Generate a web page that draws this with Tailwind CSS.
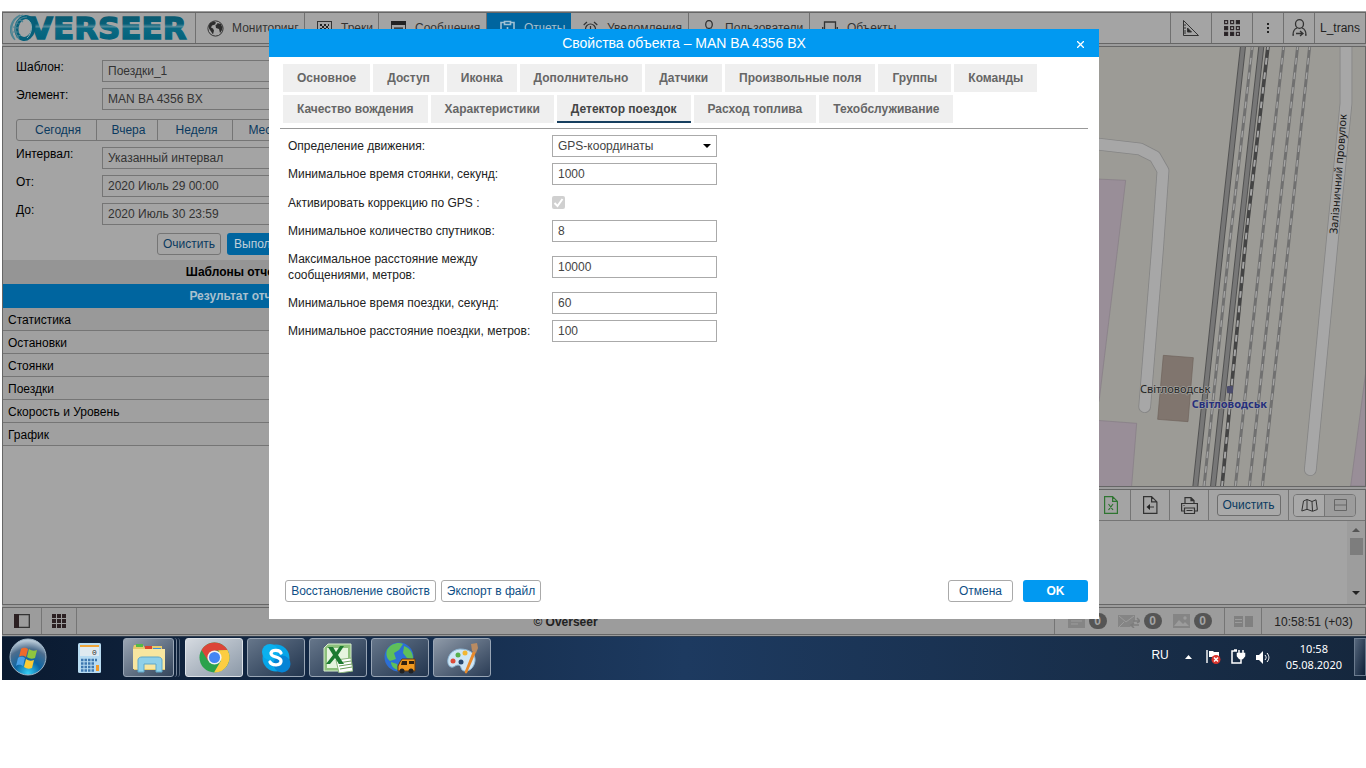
<!DOCTYPE html>
<html lang="ru">
<head>
<meta charset="utf-8">
<title>Overseer – Свойства объекта</title>
<script src="https://cdn.jsdelivr.net/npm/@tailwindcss/browser@4"></script>
</head>
<body class="min-h-screen overflow-hidden bg-white pt-[11px] font-['Liberation_Sans',Arial,sans-serif] text-[12px] leading-4 text-black">

<div class="relative ml-[2px] flex flex-col gap-[2px] bg-[#9c9c9c] py-px">

  <!-- Top navigation -->
  <header class="flex h-8 items-stretch border border-[#666] bg-[#a4a4a4] text-[12px] text-[#333]">
    <div class="flex w-[193px] shrink-0 items-center border-r border-[#707070] pl-[7px]">
      <svg class="h-[28px] w-[185px]" viewBox="0 0 185 28" role="img" aria-label="Overseer">
        <defs>
          <linearGradient id="teal" gradientUnits="userSpaceOnUse" x1="0" y1="3" x2="0" y2="26">
            <stop offset="0" stop-color="#0a5a70"/><stop offset=".3" stop-color="#075f78"/><stop offset=".42" stop-color="#4f8a9a"/><stop offset=".5" stop-color="#0b6982"/><stop offset="1" stop-color="#02627c"/>
          </linearGradient>
        </defs>
        <text x="19" y="25" font-family="DejaVu Sans" font-weight="700" font-size="31" fill="url(#teal)" stroke="url(#teal)" stroke-width="1.400">VERSEER</text>
        <ellipse cx="15" cy="14" rx="8.500" ry="11" fill="none" stroke="#07607a" stroke-width="4" transform="rotate(12 15 14)"/>
        <g fill="none" stroke="#4c8493" stroke-width="1.200">
          <path d="M13 1C3 3-2 15 5 26M10 1C1 5-3 17 4 25M17 3C6 3 2 15 9 25M5 9l5 1M3 13l6 1M3 18l6 0M6 23l5-2M9 5l4 3"/>
        </g>
        <path d="M17 6c7 2 5 14 0 18" fill="none" stroke="#88adb5" stroke-width="1"/>
      </svg>
    </div>
    <nav class="flex min-w-0 flex-1">
      <a href="#" class="flex w-[109px] items-center gap-2 border-r border-[#707070] pl-[11px]"><svg class="size-[17px] shrink-0" viewBox="0 0 17 17"><circle cx="8.500" cy="8.500" r="7.600" fill="none" stroke="#333" stroke-width="1"/><path d="M3 3l4-1.500 2 1-1 2-3 1-1 2 2 1 1 2-1 4-2-3-2-3 0-3zM10 3l4 1 1.500 4-1 3-1.500 2-1-4-3-1-.5-3 2-1z" fill="#2c2c2c"/></svg>Мониторинг</a>
      <a href="#" class="flex w-[74px] items-center gap-[9px] border-r border-[#707070] pl-3"><svg class="h-[15px] w-[15px] shrink-0" viewBox="0 0 15 15"><rect x=".5" y=".5" width="14" height="14" fill="none" stroke="#333"/><path d="M3 3h2v2H3zM7 3h2v2H7zM11 3h1v2h-1zM5 5h2v2H5zM9 5h2v2H9zM3 7h2v2H3zM7 7h2v2H7zM11 7h1v2h-1zM5 9h2v2H5zM9 9h2v2H9z" fill="#222"/></svg>Треки</a>
      <a href="#" class="flex w-[108px] items-center gap-[9px] border-r border-[#707070] pl-3"><svg class="h-[15px] w-[15px] shrink-0" viewBox="0 0 15 15"><path d="M.5 .5h14v14H.5z" fill="none" stroke="#333"/><path d="M0 0h15v4H0zM3 6.500h9v1.300H3z" fill="#222"/></svg>Сообщения</a>
      <a href="#" class="flex w-[84px] items-center gap-[9px] bg-[#00659f] pl-[13px] text-[#a8bfcd]"><svg class="h-[16px] w-[15px] shrink-0" viewBox="0 0 15 16" fill="none" stroke="#9fc0d2" stroke-width="1.600"><path d="M4 2.500H1v12h13v-12h-3M4.500 1.500h6v3h-6z"/><path d="M7.500 7v5M4 10v2M11 9v3"/></svg>Отчеты</a>
      <a href="#" class="flex w-[118px] items-center gap-[9px] border-r border-[#707070] pl-3"><svg class="size-[15px] shrink-0" viewBox="0 0 15 15" fill="none" stroke="#333" stroke-width="1.200"><circle cx="7.500" cy="8" r="5"/><path d="M7.500 5v3.500H10M.7 4L4 1M14.300 4L11 1"/></svg>Уведомления</a>
      <a href="#" class="flex w-[121px] items-center gap-[9px] border-r border-[#707070] pl-[13px]"><svg class="h-[16px] w-[14px] shrink-0" viewBox="0 0 14 16" fill="none" stroke="#333" stroke-width="1.300"><ellipse cx="7" cy="4.500" rx="3.300" ry="4"/><path d="M1 15c0-4 2-5 4-6M13 15c0-4-2-5-4-6"/></svg>Пользователи</a>
      <a href="#" class="flex items-center gap-[9px] pl-3"><svg class="h-[15px] w-[16px] shrink-0" viewBox="0 0 16 15" fill="none" stroke="#333" stroke-width="1.300"><path d="M2.500 1h11v8h-11zM.7 6v6h14.600V6M3 12v2M13 12v2"/></svg>Объекты</a>
    </nav>
    <div class="flex shrink-0">
      <button class="grid w-[41px] place-items-center border-l border-[#707070]" aria-label="Инструменты"><svg class="size-4" viewBox="0 0 16 16" fill="none" stroke="#333"><path d="M.5 .5v15h15zM1 5h2M1 8h2M1 11h2M1 13h2"/><path d="M4.500 8v4h4z" fill="#222"/></svg></button>
      <button class="grid w-[41px] place-items-center border-l border-[#707070]" aria-label="Приложения"><svg class="size-4" viewBox="0 0 16 16" fill="none" stroke="#30282c" stroke-width="1.200"><path d="M.6 .6h3v3h-3zM6.600 .6h3v3h-3zM6.600 6.600h3v3h-3zM12.400 6.600h3v3h-3zM12.400 12.400h3v3h-3z"/><path fill="#222" d="M12.400 .6h3v3h-3zM.6 6.600h3v3h-3zM.6 12.400h3v3h-3zM6.600 12.400h3v3h-3z"/></svg></button>
      <button class="grid w-[31px] place-items-center border-l border-[#707070]" aria-label="Меню"><svg class="h-3 w-1" viewBox="0 0 4 12"><path d="M1 1h2v2H1zM1 5h2v2H1zM1 9h2v2H1z" fill="#222"/></svg></button>
      <button class="grid w-[31px] place-items-center border-l border-[#707070]" aria-label="Выйти"><svg class="h-[18px] w-[15px]" viewBox="0 0 15 18" fill="none" stroke="#333" stroke-width="1.300"><ellipse cx="7.500" cy="5" rx="4" ry="4.300"/><path d="M5 9c-3 1-4 3-4 7h1M10 9c3 1 4 3 4 7h-1M4 14.500h6M8 12l3 2.500L8 17"/></svg></button>
      <a href="#" class="flex w-[51px] items-center justify-center border-l border-[#707070] text-[#222]">L_trans</a>
    </div>
  </header>

  <!-- Work area -->
  <main class="flex min-h-[559px] items-stretch">
    <aside class="flex w-[472px] shrink-0 flex-col border border-[#666] bg-[#a4a4a4]">
      <div class="flex flex-col gap-[6px] px-[13px] pt-[13px]">
        <div class="flex"><label for="tpl" class="w-[86px] leading-[14px]">Шаблон:</label><select id="tpl" class="h-[22px] flex-1 appearance-none border border-[#757575] px-[5px] text-[#333]"><option>Поездки_1</option></select></div>
        <div class="flex"><label for="unit" class="w-[86px] leading-[14px]">Элемент:</label><select id="unit" class="h-[22px] flex-1 appearance-none border border-[#757575] px-[5px] text-[#333]"><option>MAN BA 4356 BX</option></select></div>
        <div class="mt-[3px] flex h-[22px] divide-x divide-[#757575] rounded-[3px] border border-[#757575] text-[#0b3a60]">
          <button class="w-[80px] pl-[3px]">Сегодня</button><button class="w-[61px] pl-[3px]">Вчера</button><button class="w-[75px] pl-[3px]">Неделя</button><button class="w-[68px]">Месяц</button><button class="flex-1">Год</button>
        </div>
        <div class="flex"><label for="intv" class="w-[86px] leading-[14px]">Интервал:</label><select id="intv" class="h-[22px] flex-1 appearance-none border border-[#757575] px-[5px] text-[#333]"><option>Указанный интервал</option></select></div>
        <div class="flex"><label for="from" class="w-[86px] leading-[14px]">От:</label><input id="from" value="2020 Июль 29 00:00" class="h-[22px] flex-1 border border-[#757575] px-[5px] text-[#333]"></div>
        <div class="flex"><label for="to" class="w-[86px] leading-[14px]">До:</label><input id="to" value="2020 Июль 30 23:59" class="h-[22px] flex-1 border border-[#757575] px-[5px] text-[#333]"></div>
        <div class="mt-[2px] flex h-[22px] justify-center gap-[6px]">
          <button class="w-16 rounded-[3px] border border-[#757575] text-[#0b3a60]">Очистить</button>
          <button class="w-[92px] rounded-[3px] bg-[#00659f] pl-[7px] text-left text-[#c0d0da]">Выполнить</button>
        </div>
      </div>
      <h2 class="mt-[5px] flex h-6 items-center justify-center bg-[#959595] pl-1 text-[12px] font-bold">Шаблоны отчетов</h2>
      <h2 class="flex h-6 items-center justify-center bg-[#00659f] pl-1 text-[12px] font-bold text-[#a9c0ce]">Результат отчета</h2>
      <ul class="bg-[#a0a0a0]">
        <li class="h-[23px] border-b border-[#757575] bg-[#999] px-[5px] pt-[4px]"><a href="#">Статистика</a></li>
        <li class="h-[23px] border-b border-[#757575] px-[5px] pt-[4px]"><a href="#">Остановки</a></li>
        <li class="h-[23px] border-b border-[#757575] px-[5px] pt-[4px]"><a href="#">Стоянки</a></li>
        <li class="h-[23px] border-b border-[#757575] px-[5px] pt-[4px]"><a href="#">Поездки</a></li>
        <li class="h-[23px] border-b border-[#757575] px-[5px] pt-[4px]"><a href="#">Скорость и Уровень</a></li>
        <li class="h-[23px] border-b border-[#757575] px-[5px] pt-[4px]"><a href="#">График</a></li>
      </ul>
    </aside>

    <section class="flex min-w-0 flex-1 flex-col gap-[2px]">
      <div class="flex flex-1 justify-end border border-[#666] bg-[#9c9b96]">
        <svg class="h-[439px] w-[267px]" viewBox="24 141 801 1317" role="img" aria-label="Карта">
          <g fill="#998e98" stroke="#857b85" stroke-width="2">
            <path d="M20 537l87 4L86 720 27 1205h-7zM20 1261l120 9-16 200H20zM828 1110l-46 348h46z"/>
          </g>
          <g fill="none" stroke-linecap="round" stroke-linejoin="round">
            <path d="M20 432l130 15 45 23 24 42-16 228-39 480" stroke="#858585" stroke-width="38"/>
            <path d="M20 432l130 15 45 23 24 42-16 228-39 480" stroke="#a7a7a7" stroke-width="33"/>
            <path d="M768 130v180l-41 410-66 689" stroke="#858585" stroke-width="38"/>
            <path d="M768 130v180l-41 410-66 689" stroke="#a7a7a7" stroke-width="33"/>
          </g>
          <path d="M220 1066l90 7-16 192-91-7z" fill="#80756e" stroke="#6e625b" stroke-width="2"/>
          <g fill="none">
            <path d="M460 130L395 720l-79 740M515 130L449 720l-80 740" stroke="#525252" stroke-width="18"/>
            <path d="M460 130L395 720l-79 740M515 130L449 720l-80 740" stroke="#777" stroke-width="12"/>
            <path d="M488 130L420 720l-78 740M582 130L516 720l-80 740M624 130L558 720l-80 740M660 130L597 720l-80 740" stroke="#707070" stroke-width="9"/>
            <path d="M488 130L420 720l-78 740M582 130L516 720l-80 740M624 130L558 720l-80 740M660 130L597 720l-80 740" stroke="#a5a5a5" stroke-width="4" stroke-dasharray="20 24"/>
            <path d="M535 130L467 720l-71 740" stroke="#444" stroke-width="11"/>
            <path d="M535 130L467 720l-71 740" stroke="#a5a5a5" stroke-width="6" stroke-dasharray="20 24"/>
          </g>
          <rect x="411" y="1158" width="18" height="22" rx="3" fill="#4b4c6c"/>
          <g font-family="'Noto Sans'" font-size="33" stroke-linejoin="round" paint-order="stroke" stroke="#a3a3a0" stroke-width="4">
            <text x="150" y="1178" fill="#262626">Світловодськ</text>
            <text x="305" y="1223" font-weight="700" fill="#27307c">Світловодськ</text>
            <text x="0" y="0" transform="translate(742 703) rotate(-85.500)" fill="#161616" stroke="none">Залізничний провулок</text>
          </g>
        </svg>
      </div>
      <div class="flex h-[116px] flex-col border border-[#666] bg-[#a4a4a4]">
        <div class="flex h-[31px] shrink-0 items-stretch justify-end divide-x divide-[#757575] border-b border-[#757575]">
          <button class="grid w-[39px] place-items-center" aria-label="Экспорт в Excel"><svg class="h-[18px] w-[14px]" viewBox="0 0 14 18" fill="none" stroke="#2f7531" stroke-width="1.200"><path d="M.6 .6h8l4.800 4.800v12H.6zM8.600 .6v4.800h4.800M4.500 8l4.500 6M9 8l-4.500 6"/></svg></button>
          <button class="grid w-[39px] place-items-center" aria-label="Экспорт в файл"><svg class="h-[18px] w-[15px]" viewBox="0 0 15 18" fill="none" stroke="#333" stroke-width="1.200"><path d="M.6 .6h8l5.300 5.300v11.500H.6zM8.600 .6v5.300h5.300M11 11H6"/><path d="M7 8v6l-3.500-3z" fill="#222" stroke="none"/></svg></button>
          <button class="grid w-[39px] place-items-center" aria-label="Печать"><svg class="h-[17px] w-[17px]" viewBox="0 0 17 17" fill="none" stroke="#333" stroke-width="1.200"><path d="M4 6V.6h6l3 3V6M10 .6v3h3M3.500 14H.6V6.500h15.800V14h-3M2.500 8.500h1M3.500 11h10v5.500h-10zM5.500 13.500h6"/></svg></button>
          <div class="flex w-20 items-center justify-center"><button class="h-[22px] w-16 rounded-[3px] border border-[#6d6d6d] bg-[#a9a9a9] text-[#0b3a60]">Очистить</button></div>
          <div class="flex w-[76px] items-center pl-1">
            <div class="flex h-[23px] w-[63px] overflow-hidden rounded-[4px] border border-[#757575]">
              <button class="grid w-[31px] place-items-center border-r border-[#757575] bg-[#a9a9a9]" aria-label="Карта"><svg class="h-[13px] w-[17px]" viewBox="0 0 17 13" fill="none" stroke="#333"><path d="M2.500 2l3.500-1.500 5 2L15 .8l1.300 9.700-4.800 1.800-5.500-2-5.200 1.700zM6 .5v9.800M11 2.500l.5 9.500"/></svg></button>
              <button class="grid flex-1 place-items-center bg-[#9c9c9c]" aria-label="Таблица"><svg class="h-[12px] w-[13px]" viewBox="0 0 13 12" fill="none" stroke="#666"><path d="M.5 .5h12v11H.5zM.5 6h12"/></svg></button>
            </div>
          </div>
        </div>
        <div class="flex flex-1 justify-end">
          <div class="flex w-[18px] flex-col items-center bg-[#9d9d9d] pt-[7px] pb-[9px]">
            <svg class="h-1 w-2" viewBox="0 0 8 4"><path d="M0 4l4-4 4 4z" fill="#555"/></svg>
            <div class="mt-[6px] h-[17px] w-[13px] bg-[#7d7d7d]"></div>
            <svg class="mt-auto h-1 w-2" viewBox="0 0 8 4"><path d="M0 0l4 4 4-4z" fill="#222"/></svg>
          </div>
        </div>
      </div>
    </section>
  </main>

  <!-- Status bar -->
  <footer class="flex h-7 items-stretch border border-[#666] bg-[#9c9c9c]">
    <button class="grid w-[39px] place-items-center border-r border-[#757575]" aria-label="Боковая панель"><svg class="h-[14px] w-4" viewBox="0 0 16 14"><path d="M.7 .7h14.600v12.600H.7z" fill="none" stroke="#333" stroke-width="1.300"/><path d="M0 0h5v14H0z" fill="#2c2022"/></svg></button>
    <button class="grid w-[35px] place-items-center border-r border-[#757575]" aria-label="Сетка"><svg class="size-[14px]" viewBox="0 0 14 14"><path d="M0 0h4v4H0zM5 0h4v4H5zM10 0h4v4h-4zM0 5h4v4H0zM5 5h4v4H5zM10 5h4v4h-4zM0 10h4v4H0zM5 10h4v4H5zM10 10h4v4h-4z" fill="#2c2022"/></svg></button>
    <p class="flex flex-1 items-center justify-center pt-[2px] font-bold text-[#222]">© Overseer</p>
    <div class="flex w-[170px] items-center justify-center gap-[11px] border-l border-[#757575] font-bold text-[#a4a4a4]">
      <span class="flex items-center gap-1"><svg class="h-[13px] w-[17px]" viewBox="0 0 17 13"><path d="M0 0h17v13H0z" fill="#858585"/><path d="M3 3h11M3 6h11M3 9h7" stroke="#9c9c9c"/></svg><b class="grid h-4 w-[18px] place-items-center rounded-full bg-[#555]">0</b></span>
      <span class="flex items-center gap-1"><svg class="h-[13px] w-[22px]" viewBox="0 0 22 13"><path d="M0 0h17v6l-5 6H0z" fill="#858585"/><path d="M1 1l7 6 8-6M1 12l5-5" fill="none" stroke="#9c9c9c"/><path d="M15 6h7M19 3l3 3-3 2M21 10h-7M16 8l-3 2 3 3" fill="none" stroke="#7d7d7d" stroke-width="1.500"/></svg><b class="grid h-4 w-[18px] place-items-center rounded-full bg-[#555]">0</b></span>
      <span class="flex items-center gap-1"><svg class="h-[14px] w-[17px]" viewBox="0 0 17 14"><path d="M0 0h17v14H0z" fill="#858585"/><circle cx="12" cy="4" r="1.700" fill="#9c9c9c"/><path d="M1 12l5-6 4 4 2-2 4 4z" fill="#9c9c9c"/></svg><b class="grid h-4 w-[18px] place-items-center rounded-full bg-[#555]">0</b></span>
    </div>
    <div class="grid w-[37px] place-items-center border-l border-[#757575]"><svg class="h-[11px] w-[19px]" viewBox="0 0 19 11"><path d="M0 0h9v11H0zM11 0h8v11h-8z" fill="#808080"/><path d="M1 3.500h7M1 6.500h7" stroke="#9c9c9c"/></svg></div>
    <p class="flex w-[104px] items-center justify-center border-l border-[#757575] pt-px text-[#222]">10:58:51 (+03)</p>
  </footer>

  <!-- Object properties dialog -->
  <div role="dialog" aria-labelledby="dlg-title" class="absolute top-[18px] left-1/2 flex min-h-[590px] w-[830px] -translate-x-1/2 flex-col bg-white">
    <div class="grid h-7 grid-cols-[38px_1fr_38px] items-center bg-[#0199f1] text-white">
      <h1 id="dlg-title" class="col-start-2 text-center text-[14px]">Свойства объекта – MAN BA 4356 BX</h1>
      <button class="grid place-items-center" aria-label="Закрыть"><svg class="mt-[2px] size-[7px]" viewBox="0 0 7 7"><path d="M0 0l7 7M7 0L0 7" stroke="#fff" stroke-width="1.300"/></svg></button>
    </div>
    <div class="mx-[11px] flex flex-wrap gap-[3px] border-b border-[#999] pt-[7px] pb-[5px] pl-[3px] font-bold text-[#666]">
      <button class="h-7 bg-[#efefef] px-[14px]">Основное</button>
      <button class="h-7 bg-[#efefef] px-[14px]">Доступ</button>
      <button class="h-7 bg-[#efefef] px-[14px]">Иконка</button>
      <button class="h-7 bg-[#efefef] px-[14px]">Дополнительно</button>
      <button class="h-7 bg-[#efefef] px-[14px]">Датчики</button>
      <button class="h-7 bg-[#efefef] px-[14px]">Произвольные поля</button>
      <button class="h-7 bg-[#efefef] px-[14px]">Группы</button>
      <button class="h-7 bg-[#efefef] px-[14px]">Команды</button>
      <button class="h-7 bg-[#efefef] px-[14px]">Качество вождения</button>
      <button class="h-7 bg-[#efefef] px-[14px]">Характеристики</button>
      <button class="h-7 border-b-2 border-[#173f5f] bg-[#efefef] px-[14px] pt-[2px] text-[#444]">Детектор поездок</button>
      <button class="h-7 bg-[#efefef] px-[14px]">Расход топлива</button>
      <button class="h-7 bg-[#efefef] px-[14px]">Техобслуживание</button>
    </div>
    <form class="grid grid-cols-[264px_165px] items-center gap-y-[6px] pt-[6px] pl-[19px] text-[#222]">
      <label for="motion">Определение движения:</label>
      <div class="relative">
        <select id="motion" class="block h-[22px] w-full appearance-none border border-[#aaa] px-[5px] text-[#444]"><option>GPS-координаты</option></select>
        <svg class="pointer-events-none absolute top-[9px] right-[6px] h-1 w-2" viewBox="0 0 8 4"><path d="M0 0l4 4 4-4z" fill="#000"/></svg>
      </div>
      <label for="stop">Минимальное время стоянки, секунд:</label>
      <input id="stop" value="1000" class="h-[22px] border border-[#aaa] px-[5px] text-[#444]">
      <label for="gps" class="pt-[4px] pb-[3px]">Активировать коррекцию по GPS :</label>
      <div class="relative size-[13px]">
        <input id="gps" type="checkbox" checked disabled class="block size-[13px] appearance-none rounded-[2px] bg-[#d0d0d0]">
        <svg class="pointer-events-none absolute inset-0 size-[13px]" viewBox="0 0 13 13"><path d="M2.500 7l3 3 5-7" fill="none" stroke="#fff" stroke-width="2"/></svg>
      </div>
      <label for="sat">Минимальное количество спутников:</label>
      <input id="sat" value="8" class="h-[22px] border border-[#aaa] px-[5px] text-[#444]">
      <label for="dist" class="py-[3px] pr-10">Максимальное расстояние между сообщениями, метров:</label>
      <input id="dist" value="10000" class="h-[22px] border border-[#aaa] px-[5px] text-[#444]">
      <label for="trip">Минимальное время поездки, секунд:</label>
      <input id="trip" value="60" class="h-[22px] border border-[#aaa] px-[5px] text-[#444]">
      <label for="tripd">Минимальное расстояние поездки, метров:</label>
      <input id="tripd" value="100" class="h-[22px] border border-[#aaa] px-[5px] text-[#444]">
    </form>
    <div class="mt-auto flex h-[39px] items-start pr-[11px] pl-4 text-[#0f4f86]">
      <button class="h-[22px] w-[151px] rounded-[3px] border border-[#aaa]">Восстановление свойств</button>
      <button class="ml-[5px] h-[22px] w-[100px] rounded-[3px] border border-[#aaa]">Экспорт в файл</button>
      <button class="ml-auto h-[22px] w-[65px] rounded-[3px] border border-[#aaa]">Отмена</button>
      <button class="ml-[10px] h-[22px] w-[65px] rounded-[3px] bg-[#0199f1] font-bold text-white">OK</button>
    </div>
  </div>
</div>

<!-- System taskbar -->
<div class="ml-[2px] flex h-11 items-start border-t border-[#2d3c4e] bg-linear-to-r from-[#0a1a30] via-[#1d3a60] to-[#15273d] pt-px text-white">
  <button class="grid w-[52px] place-items-center" aria-label="Пуск"><svg class="h-10 w-[40px]" viewBox="0 0 40 40"><defs><radialGradient id="orb" cx=".5" cy=".95" r=".9"><stop offset="0" stop-color="#35d0f6"/><stop offset=".4" stop-color="#0d66a4"/><stop offset=".75" stop-color="#4d6d8d"/><stop offset="1" stop-color="#b7c8d6"/></radialGradient></defs><circle cx="20" cy="19" r="18" fill="url(#orb)" stroke="#9fb6c8"/><path d="M13 11c3-2 5-1 7 0l-2 8c-2-1-4-2-7 0z" fill="#ee6a2b"/><path d="M21 11c3 2 5 2 8 1l-2 8c-3 1-5 1-8-1z" fill="#8fc63f"/><path d="M10 20c3-2 5-1 7 0l-2 8c-2-1-4-2-7 0z" fill="#4aa0e6"/><path d="M18 21c3 2 5 2 8 1l-2 8c-3 1-5 1-8-1z" fill="#fccb33"/></svg></button>
  <button class="ml-[9px] grid h-[39px] w-[52px] place-items-center" aria-label="Калькулятор"><svg class="h-[30px] w-[23px]" viewBox="0 0 23 30"><rect width="23" height="30" rx="1.500" fill="#b8dcf2"/><path d="M2 3h19v10H2z" fill="#dfeaf0"/><path d="M2 2h19v2H2z" fill="#f0a63a"/><text x="14" y="12" font-family="Liberation Mono" font-size="8" fill="#333">0</text><path d="M3 17h16M3 20.500h13M3 24h13M3 27.500h13" stroke="#3f78b0" stroke-width="2.300" stroke-dasharray="2.500 1"/><path d="M18 22h3v6h-3z" fill="#f19a2a"/></svg></button>
  <button class="ml-[8px] grid h-[39px] w-[51px] place-items-center rounded-[3px] border border-[#98a5b5] bg-linear-to-br from-[#9aa5b3] to-[#34455c]" aria-label="Проводник"><svg class="h-[31px] w-[34px]" viewBox="0 0 34 31"><path d="M1 6l1-3h9l2 3h6V4h11v5h3v19H2z" fill="#e8cb6b"/><path d="M4 2h7v3H4z" fill="#54b948"/><path d="M13 4h7v3h-7z" fill="#d9432f"/><path d="M21 6h8v3h-8z" fill="#3b8fd9"/><path d="M1 7h32v20H1z" fill="#f8e6a0"/><path d="M6 18c0-2 2-3 4-3h16c2 0 4 1 4 3v12h-6v-8H12v8H6z" fill="#8fd0ea" stroke="#5ea7c9"/></svg></button>
  <div class="h-[39px] w-[3px] rounded-r border-r border-[#77869a]"></div><div class="h-[39px] w-[3px] rounded-r border-r border-[#55657b]"></div>
  <button class="ml-[5px] grid h-[39px] w-[58px] place-items-center rounded-[3px] border border-[#dde2e8] bg-linear-to-br from-[#d5dae0] to-[#8c99a8]" aria-label="Chrome"><svg class="size-[31px]" viewBox="0 0 32 32"><circle cx="16" cy="16" r="15.500" fill="#2ba24c"/><path d="M2.600 8.300A15.500 15.500 0 0 1 29.400 8.300L16 9 9.500 19.500z" fill="#dc4437"/><path d="M29.400 8.300A15.500 15.500 0 0 1 15.500 31.500L22.500 19.500 20 8.500z" fill="#fccd41"/><circle cx="16" cy="16" r="7.300" fill="#f2f2f2"/><circle cx="16" cy="16" r="5.700" fill="#4285f4"/></svg></button>
  <button class="ml-1 grid h-[39px] w-[58px] place-items-center rounded-[3px] border border-[#98a5b5] bg-linear-to-br from-[#66768a] to-[#23364f]" aria-label="Skype"><svg class="size-[30px]" viewBox="0 0 30 30"><circle cx="15" cy="15" r="13.500" fill="#06a5e8"/><circle cx="9" cy="9" r="8" fill="#0ab1ef"/><circle cx="21" cy="21" r="8.500" fill="#0584d6"/><path d="M20 10c-1-3-9-4-10 0-.5 5 10 3 10 8 0 5-9 5-11 1" fill="none" stroke="#fff" stroke-width="3.300" stroke-linecap="round"/></svg></button>
  <button class="ml-1 grid h-[39px] w-[58px] place-items-center rounded-[3px] border border-[#98a5b5] bg-linear-to-br from-[#66768a] to-[#23364f]" aria-label="Excel"><svg class="size-[30px]" viewBox="0 0 30 30"><path d="M5 1h23v27H1V5z" fill="#8dc07c" stroke="#d9efcf"/><path d="M4 5h21v20H4z" fill="#e6f4df"/><path d="M13 17l15-2 2 13-14 2z" fill="#fff" stroke="#8cb67d"/><path d="M15 20l13-2M16 23l13-2M17 26l12-2" stroke="#6a9c59"/><path d="M5 4h5l3 5 4-6h4l-6 9 6 9h-5l-4-6-5 6H3l7-9z" fill="#1c7a31"/></svg></button>
  <button class="ml-1 grid h-[39px] w-[58px] place-items-center rounded-[3px] border border-[#98a5b5] bg-linear-to-br from-[#66768a] to-[#23364f]" aria-label="Мониторинг транспорта"><svg class="size-8" viewBox="0 0 32 32"><circle cx="15" cy="15" r="14.500" fill="#2c6fd6"/><path d="M3 8C7 1 15 0 19 2l-4 6-5 3 2 6-6 2C2 16 2 11 3 8zM20 4c6 2 9 7 9 13l-6-1-4-5zM7 20l6 2 1 6c-4-1-7-4-7-8z" fill="#5fbf5a"/><path d="M16 20l2-3h13v12H14v-5z" fill="#f29a1f" stroke="#6b3b0c"/><path d="M18 19h5v4h-6zM25 19h5v3h-5z" fill="#33220f"/><circle cx="18" cy="29" r="2.500" fill="#222"/><circle cx="27" cy="29" r="2.500" fill="#222"/></svg></button>
  <button class="ml-1 grid h-[39px] w-[58px] place-items-center rounded-[3px] border border-[#98a5b5] bg-linear-to-br from-[#8f9aa8] to-[#2b3d56]" aria-label="Paint"><svg class="size-8" viewBox="0 0 32 32"><path d="M14 7c9 0 16 4 15 12-1 7-6 11-11 10-4-1-2-6-6-6-3 0-4 3-7 2C-1 23 1 8 14 7z" fill="#cfe6f5" stroke="#8db7d6"/><circle cx="7" cy="19" r="2.500" fill="#dd4b39"/><circle cx="12" cy="13" r="2.500" fill="#57b04b"/><circle cx="19" cy="11" r="2.500" fill="#f2b632"/><circle cx="15" cy="20" r="2.500" fill="#27476e"/><path d="M27 9l3 1-9 21c-1 1-3 0-2-2z" fill="#e88a2b"/><path d="M25 2l6-1 1 5-2 5-4-2z" fill="#b98b62"/></svg></button>
  <div class="ml-auto flex h-[38px] items-center">
    <span class="mb-1 text-[12px]">RU</span>
    <svg class="ml-4 h-1 w-[7px]" viewBox="0 0 7 4"><path d="M0 4l3.500-4L7 4z" fill="#fff"/></svg>
    <svg class="ml-[14px] size-4" viewBox="0 0 16 16"><path d="M1 1v13" stroke="#fff" stroke-width="1.400"/><path d="M3 2h4l1 1h5v5H3z" fill="#fff"/><circle cx="10" cy="10.500" r="4.500" fill="#d8342c"/><path d="M8 8.500l4 4M12 8.500l-4 4" stroke="#fff" stroke-width="1.500"/></svg>
    <svg class="ml-2 size-4" viewBox="0 0 16 16" fill="none" stroke="#fff" stroke-width="1.500"><path d="M7 2H2v12h6M4 1h3M9 1v4M13 1v4M11 9v5H8"/><path d="M7.500 4.500h7V7l-2 2.500h-3L7.500 7z" fill="#fff"/></svg>
    <svg class="ml-[9px] size-[15px]" viewBox="0 0 15 15"><path d="M1 5h3l4-4v13l-4-4H1z" fill="#fff"/><path d="M10 5c1.500 2 1.500 3 0 5M12 3c2.500 3 2.500 6 0 9" fill="none" stroke="#fff"/></svg>
    <p class="ml-4 text-center font-['Noto_Sans',sans-serif] text-[11px] leading-4">10:58<br>05.08.2020</p>
    <div class="ml-3 h-[38px] w-[12px] border border-[#6b7b8e] bg-linear-to-br from-[#56677c] to-[#0e2038]"></div>
  </div>
</div>
</body>
</html>
